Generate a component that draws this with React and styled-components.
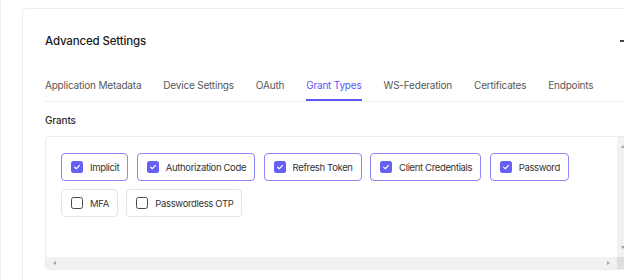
import React, { useState } from "react";
import styled, { createGlobalStyle } from "styled-components";

const GlobalStyle = createGlobalStyle`
  html, body {
    margin: 0;
    padding: 0;
    background: #ffffff;
    overflow: hidden;
  }
  body {
    font-family: Inter, "Noto Sans", "Liberation Sans", sans-serif;
    color: #222;
  }
`;

const Page = styled.div`
  width: 700px;
  height: 280px;
  border-left: 1px solid #f1f1f1;
  padding: 8px 0 0 21px;
  box-sizing: border-box;
`;

const Card = styled.section`
  width: 628px;
  min-height: 300px;
  border: 1px solid #ededed;
  border-radius: 4px;
  padding: 24px 19px 0 22px;
  box-sizing: border-box;
`;

const Header = styled.div`
  display: flex;
  align-items: center;
  justify-content: space-between;
  height: 16px;
`;

const Title = styled.h2`
  margin: 0;
  font-size: 11.5px;
  letter-spacing: -0.15px;
  line-height: 16px;
  font-weight: 500;
  color: #1a1a1a;
`;

const Collapse = styled.span`
  width: 10px;
  height: 1.5px;
  background: #444;
`;

const TabList = styled.nav`
  display: flex;
  gap: 22px;
  margin-top: 28px;
  border-bottom: 1px solid #efefef;
`;

const Tab = styled.button`
  flex-shrink: 0;
  white-space: nowrap;
  border: none;
  background: none;
  padding: 0 0 6px;
  margin: 0;
  font-family: inherit;
  font-size: 10px;
  letter-spacing: -0.2px;
  line-height: 16px;
  color: ${(p) => (p.$active ? "#5d55f5" : "#585858")};
  border-bottom: 2px solid ${(p) => (p.$active ? "#6159f6" : "transparent")};
  cursor: pointer;
`;

const SectionLabel = styled.div`
  margin-top: 10px;
  font-size: 10px;
  letter-spacing: -0.15px;
  line-height: 16px;
  font-weight: 500;
  color: #2a2a2a;
`;

const GrantBox = styled.div`
  margin-top: 8px;
  height: 134px;
  border: 1px solid #ececec;
  border-radius: 4px;
  box-sizing: border-box;
  overflow: hidden;
  display: grid;
  grid-template-columns: 1fr 12px;
  grid-template-rows: 1fr 12px;
`;

const ChipWrap = styled.div`
  display: flex;
  flex-wrap: wrap;
  align-content: flex-start;
  gap: 8px 8.5px;
  padding: 16px 15px;
`;

const Track = styled.div`
  background: #f1f1f1;
  display: flex;
  flex-direction: ${(p) => (p.$vertical ? "column" : "row")};
  align-items: center;
  justify-content: space-between;
  padding: ${(p) => (p.$vertical ? "5px 0" : "0 4px")};
`;

const Corner = styled.div`
  background: #dedede;
`;

const Arrow = styled.span`
  width: 0;
  height: 0;
  border: 3px solid transparent;
  ${(p) => `border-${p.$side}-color: #a4a4a4;`}
  ${(p) =>
    p.$side === "bottom" || p.$side === "top"
      ? "border-left-width: 2.5px; border-right-width: 2.5px;"
      : "border-top-width: 2.5px; border-bottom-width: 2.5px;"}
`;

const Chip = styled.label`
  display: inline-flex;
  align-items: center;
  gap: 7px;
  height: 28px;
  padding: 0 8px 0 9px;
  box-sizing: border-box;
  white-space: nowrap;
  border: ${(p) => (p.$checked ? "1.5px solid #8c86f6" : "1px solid #e4e4e4")};
  border-radius: 4px;
  font-size: 9.5px;
  letter-spacing: -0.35px;
  color: #333;
  cursor: pointer;
  user-select: none;
`;

const Box = styled.span`
  width: 12px;
  height: 12px;
  box-sizing: border-box;
  border-radius: 2.5px;
  display: flex;
  align-items: center;
  justify-content: center;
  background: ${(p) => (p.$checked ? "#6760f4" : "#fff")};
  border: ${(p) => (p.$checked ? "none" : "1.5px solid #4a4a4a")};
`;

const tabs = [
  "Application Metadata",
  "Device Settings",
  "OAuth",
  "Grant Types",
  "WS-Federation",
  "Certificates",
  "Endpoints",
];

const initialGrants = [
  { name: "Implicit", checked: true },
  { name: "Authorization Code", checked: true },
  { name: "Refresh Token", checked: true },
  { name: "Client Credentials", checked: true },
  { name: "Password", checked: true },
  { name: "MFA", checked: false },
  { name: "Passwordless OTP", checked: false },
];

const Check = () => (
  <svg width="8" height="8" viewBox="0 0 10 10" fill="none">
    <path
      d="M2 5.2l2 2L8.2 3"
      stroke="#fff"
      strokeWidth="1.4"
      strokeLinecap="round"
      strokeLinejoin="round"
    />
  </svg>
);

const App = () => {
  const [activeTab, setActiveTab] = useState("Grant Types");
  const [grants, setGrants] = useState(initialGrants);

  const toggle = (name) =>
    setGrants((list) =>
      list.map((g) => (g.name === name ? { ...g, checked: !g.checked } : g))
    );

  return (
    <Page>
      <GlobalStyle />
      <Card>
        <Header>
          <Title>Advanced Settings</Title>
          <Collapse />
        </Header>
        <TabList>
          {tabs.map((t) => (
            <Tab key={t} $active={t === activeTab} onClick={() => setActiveTab(t)}>
              {t}
            </Tab>
          ))}
        </TabList>
        <SectionLabel>Grants</SectionLabel>
        <GrantBox>
          <ChipWrap>
            {grants.map((g) => (
              <Chip key={g.name} $checked={g.checked} onClick={() => toggle(g.name)}>
                <Box $checked={g.checked}>{g.checked && <Check />}</Box>
                {g.name}
              </Chip>
            ))}
          </ChipWrap>
          <Track $vertical>
            <Arrow $side="bottom" />
            <Arrow $side="top" />
          </Track>
          <Track>
            <Arrow $side="right" />
            <Arrow $side="left" />
          </Track>
          <Corner />
        </GrantBox>
      </Card>
    </Page>
  );
};

export default App;
